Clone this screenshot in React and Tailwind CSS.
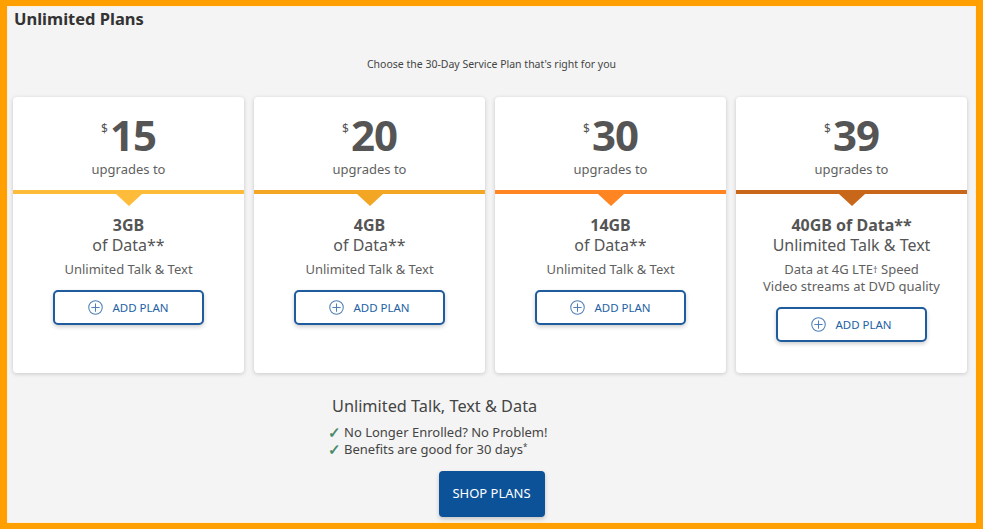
import React from "react";

const plans = [
  { price: "15", stripe: "bg-[#ffbc3a]", tri: "border-t-[#ffbc3a]", lines: [["3GB", true], ["of Data**", false]], desc: ["Unlimited Talk & Text"] },
  { price: "20", stripe: "bg-[#f2a624]", tri: "border-t-[#f2a624]", lines: [["4GB", true], ["of Data**", false]], desc: ["Unlimited Talk & Text"] },
  { price: "30", stripe: "bg-[#ff8422]", tri: "border-t-[#ff8422]", lines: [["14GB", true], ["of Data**", false]], desc: ["Unlimited Talk & Text"] },
  { price: "39", stripe: "bg-[#c8661a]", tri: "border-t-[#c8661a]", lines: [["40GB of Data**", true], ["Unlimited Talk & Text", false]], desc: ["LTE", "Video streams at DVD quality"] },
];

function PlusCircle() {
  return (
    <svg width="15" height="15" viewBox="0 0 16 16" fill="none" stroke="#4d7fb8" strokeWidth="1.1">
      <circle cx="8" cy="8" r="7.2" />
      <path d="M8 3.6v8.8M3.6 8h8.8" />
    </svg>
  );
}

function Card({ p }) {
  return (
    <div className="w-[231px] h-[276px] bg-white rounded-[4px] shadow-[0_1px_4px_rgba(0,0,0,0.18)] flex flex-col">
      <div className="h-[93px] flex flex-col items-center pt-[19px]">
        <div className="flex items-start text-[#555555] h-[38px] leading-[38px]">
          <span className="text-[12px] leading-none mt-[7px] mr-[2px]">$</span>
          <span className="text-[42px] font-bold tracking-[-1px]">{p.price}</span>
        </div>
        <div className="text-[13px] leading-[18px] text-[#5f5f5f] mt-[6px]">upgrades to</div>
      </div>
      <div className={`relative h-[4px] ${p.stripe}`}>
        <div className={`absolute left-1/2 -translate-x-1/2 top-[4px] w-0 h-0 border-l-[13px] border-r-[13px] border-t-[12px] border-l-transparent border-r-transparent ${p.tri}`} />
      </div>
      <div className="flex flex-col items-center pt-[21px] text-[#555555]">
        {p.lines.map(([t, b], i) => (
          <div key={i} className={`text-[16px] leading-[20px] ${b ? "font-bold" : ""}`}>{t}</div>
        ))}
        <div className="mt-[6px] flex flex-col items-center text-[13px] leading-[17px] text-[#5f5f5f]">
          {p.desc.map((d, i) =>
            d === "LTE" ? (
              <div key={i}>Data at 4G LTE<sup className="text-[9px] relative -top-[1px]">†</sup> Speed</div>
            ) : (
              <div key={i}>{d}</div>
            )
          )}
        </div>
        <button className="mt-[12px] w-[151px] h-[35px] border-2 border-[#1f5c9e] rounded-[5px] bg-white shadow-[0_2px_4px_rgba(0,0,0,0.2)] flex items-center justify-center gap-[9px] text-[#2462a5] text-[11.5px]">
          <PlusCircle />
          <span>ADD PLAN</span>
        </button>
      </div>
    </div>
  );
}

export default function App() {
  return (
    <div className="w-[983px] h-[529px] border-x-[7px] border-t-[6px] border-b-[6px] border-[#ff9f00] bg-[#f4f4f4] font-['Noto_Sans',sans-serif] overflow-hidden">
      <div className="h-full border border-[#fbeedd] flex flex-col">
        <h1 className="pl-[6px] pt-[1px] text-[16.5px] leading-[22px] font-bold text-[#333333]">Unlimited Plans</h1>
        <p className="mt-[26px] text-center text-[10.5px] leading-[16px] text-[#444444]">Choose the 30-Day Service Plan that's right for you</p>
        <div className="mt-[25px] pl-[5px] flex gap-[10px]">
          {plans.map((p) => (
            <Card key={p.price} p={p} />
          ))}
        </div>
        <div className="flex flex-col items-center">
          <div className="self-start ml-[320px] mt-[21px]">
            <div className="pl-[4px] text-[16.3px] leading-[24px] text-[#444444]">Unlimited Talk, Text &amp; Data</div>
            <ul className="mt-[6px] text-[13px] leading-[17px] text-[#444444]">
              <li className="flex gap-[3px] h-[17px] items-center"><span className="text-[#4a8a6a] text-[15px] font-bold leading-none">✓</span><span>No Longer Enrolled? No Problem!</span></li>
              <li className="flex gap-[3px] h-[17px] items-center"><span className="text-[#4a8a6a] text-[15px] font-bold leading-none">✓</span><span>Benefits are good for 30 days<sup className="text-[8px] leading-none">*</sup></span></li>
            </ul>
          </div>
          <button className="mt-[13px] w-[106px] h-[46px] bg-[#0c5299] rounded-[4px] text-white text-[13px] shadow-[0_2px_4px_rgba(0,0,0,0.2)]">SHOP PLANS</button>
        </div>
      </div>
    </div>
  );
}
